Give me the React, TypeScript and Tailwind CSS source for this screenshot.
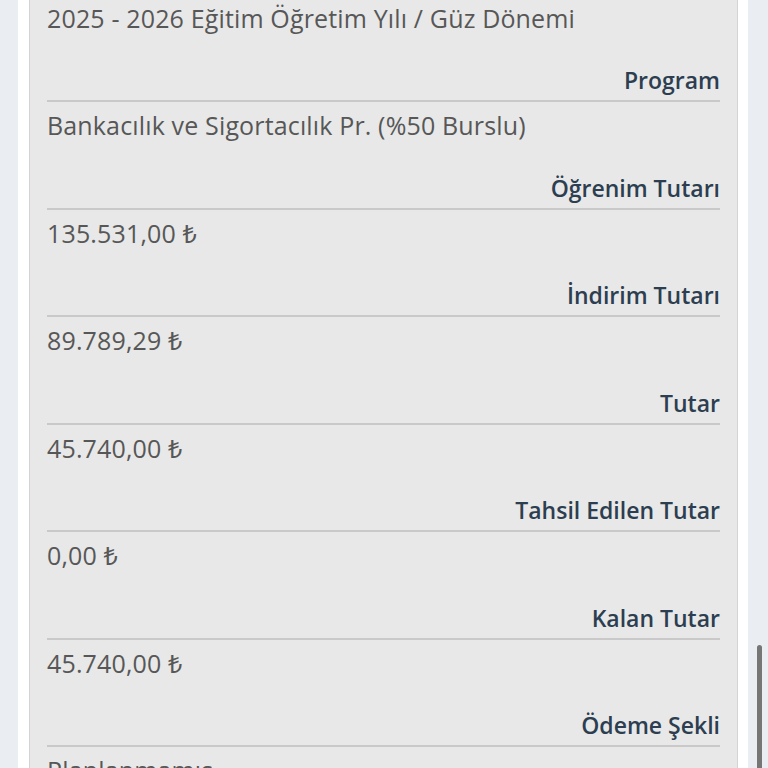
const rows = [
  { label: 'Program', value: 'Bankacılık ve Sigortacılık Pr. (%50 Burslu)' },
  { label: 'Öğrenim Tutarı', value: '135.531,00 ₺' },
  { label: 'İndirim Tutarı', value: '89.789,29 ₺' },
  { label: 'Tutar', value: '45.740,00 ₺' },
  { label: 'Tahsil Edilen Tutar', value: '0,00 ₺' },
  { label: 'Kalan Tutar', value: '45.740,00 ₺' },
  { label: 'Ödeme Şekli', value: 'Planlanmamış' },
];

const App = () => {
  return (
    <div
      className="relative h-[768px] overflow-hidden bg-[#eaedf1] pl-[18px] pr-[20px]"
      style={{ fontFamily: '"Open Sans", "Noto Sans", sans-serif' }}
    >
      <div className="h-full bg-white pl-[11px] pr-[10px]">
        <div className="h-full border-x border-[#d4d4d4] bg-[#e8e8e8] px-[17px]">
          {/* Term */}
          <div className="pt-[2px] text-[25px] leading-[32px] tracking-[0.15px] text-[#575757]">
            2025 - 2026 Eğitim Öğretim Yılı / Güz Dönemi
          </div>

          {rows.map((row, i) => (
            <div key={row.label} className={i === 0 ? 'mt-[30px]' : 'mt-[30.5px]'}>
              <div className="border-b-2 border-[#c9c9c9] pb-[4px] text-right text-[23px] font-semibold leading-[32px] text-[#2c3e50]">
                {row.label}
              </div>
              <div className="mt-[7px] text-[25px] leading-[32px] tracking-[0.15px] text-[#575757]">
                {row.value}
              </div>
            </div>
          ))}
        </div>
      </div>

      {/* scrollbar thumb */}
      <div className="absolute right-[6px] top-[645px] h-[140px] w-[5px] rounded-full bg-[#767676]" />
    </div>
  );
};

export default App;
